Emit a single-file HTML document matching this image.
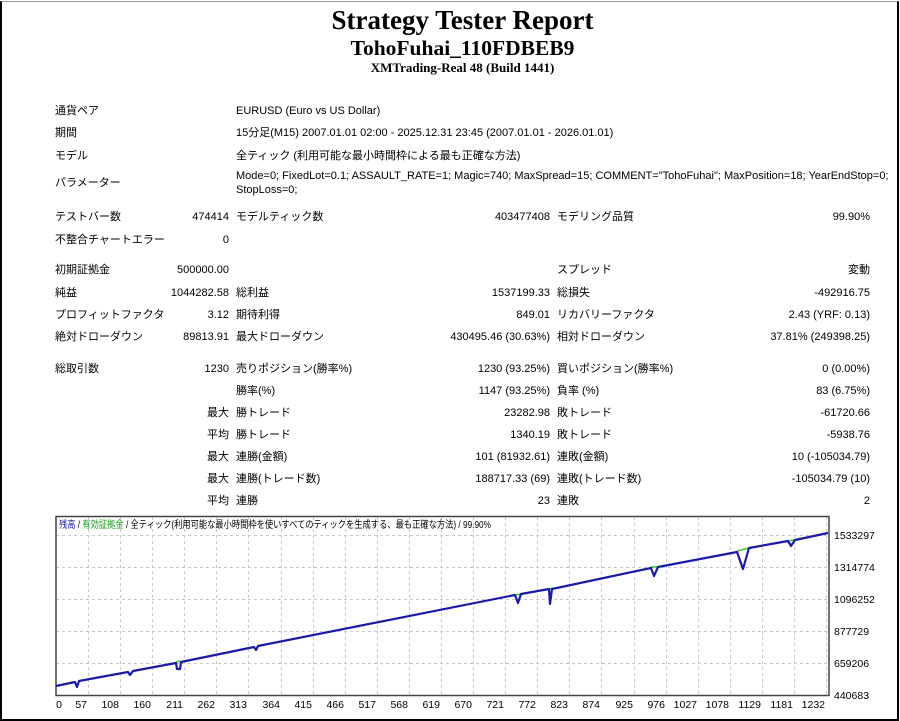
<!DOCTYPE html>
<html><head><meta charset="utf-8">
<style>
*{margin:0;padding:0}
body{width:900px;height:721px;background:#fff;position:relative;overflow:hidden;font-family:"Liberation Sans","Noto Sans CJK JP",sans-serif;font-size:11px;color:#000}
.frame{position:absolute;left:0;top:1px;width:895px;height:717px;border-left:2px solid #000;border-right:2px solid #000;border-bottom:2px solid #000;border-top:1px solid #999}
.t{position:absolute;white-space:nowrap;line-height:14px}
.r{text-align:right}
h1,h2,h3{position:absolute;left:0;width:925px;text-align:center;font-family:"Liberation Serif",serif;font-weight:bold;white-space:nowrap}
h1{top:5px;font-size:27px}
h2{top:36px;font-size:21.5px}
h3{top:60px;font-size:13px}
</style></head><body>
<div class="frame"></div>
<h1>Strategy Tester Report</h1>
<h2>TohoFuhai_110FDBEB9</h2>
<h3>XMTrading-Real 48 (Build 1441)</h3>

<div class="t" style="left:55px;top:104px">通貨ペア</div>
<div class="t" style="left:236px;top:104px">EURUSD (Euro vs US Dollar)</div>
<div class="t" style="left:55px;top:126px">期間</div>
<div class="t" style="left:236px;top:126px">15分足(M15) 2007.01.01 02:00 - 2025.12.31 23:45 (2007.01.01 - 2026.01.01)</div>
<div class="t" style="left:55px;top:149px">モデル</div>
<div class="t" style="left:236px;top:149px">全ティック (利用可能な最小時間枠による最も正確な方法)</div>
<div class="t" style="left:55px;top:176px">パラメーター</div>
<div class="t" style="left:236px;top:169px">Mode=0; FixedLot=0.1; ASSAULT_RATE=1; Magic=740; MaxSpread=15; COMMENT="TohoFuhai"; MaxPosition=18; YearEndStop=0;</div>
<div class="t" style="left:236px;top:183px">StopLoss=0;</div>

<div class="t" style="left:55px;top:210px">テストバー数</div>
<div class="t r" style="right:671px;top:210px">474414</div>
<div class="t" style="left:236px;top:210px">モデルティック数</div>
<div class="t r" style="right:350px;top:210px">403477408</div>
<div class="t" style="left:557px;top:210px">モデリング品質</div>
<div class="t r" style="right:30px;top:210px">99.90%</div>
<div class="t" style="left:55px;top:233px">不整合チャートエラー</div>
<div class="t r" style="right:671px;top:233px">0</div>

<div class="t" style="left:55px;top:263px">初期証拠金</div>
<div class="t r" style="right:671px;top:263px">500000.00</div>
<div class="t" style="left:557px;top:263px">スプレッド</div>
<div class="t r" style="right:30px;top:263px">変動</div>

<div class="t" style="left:55px;top:286px">純益</div>
<div class="t r" style="right:671px;top:286px">1044282.58</div>
<div class="t" style="left:236px;top:286px">総利益</div>
<div class="t r" style="right:350px;top:286px">1537199.33</div>
<div class="t" style="left:557px;top:286px">総損失</div>
<div class="t r" style="right:30px;top:286px">-492916.75</div>

<div class="t" style="left:55px;top:308px">プロフィットファクタ</div>
<div class="t r" style="right:671px;top:308px">3.12</div>
<div class="t" style="left:236px;top:308px">期待利得</div>
<div class="t r" style="right:350px;top:308px">849.01</div>
<div class="t" style="left:557px;top:308px">リカバリーファクタ</div>
<div class="t r" style="right:30px;top:308px">2.43 (YRF: 0.13)</div>

<div class="t" style="left:55px;top:330px">絶対ドローダウン</div>
<div class="t r" style="right:671px;top:330px">89813.91</div>
<div class="t" style="left:236px;top:330px">最大ドローダウン</div>
<div class="t r" style="right:350px;top:330px">430495.46 (30.63%)</div>
<div class="t" style="left:557px;top:330px">相対ドローダウン</div>
<div class="t r" style="right:30px;top:330px">37.81% (249398.25)</div>

<div class="t" style="left:55px;top:362px">総取引数</div>
<div class="t r" style="right:671px;top:362px">1230</div>
<div class="t" style="left:236px;top:362px">売りポジション(勝率%)</div>
<div class="t r" style="right:350px;top:362px">1230 (93.25%)</div>
<div class="t" style="left:557px;top:362px">買いポジション(勝率%)</div>
<div class="t r" style="right:30px;top:362px">0 (0.00%)</div>

<div class="t" style="left:236px;top:384px">勝率(%)</div>
<div class="t r" style="right:350px;top:384px">1147 (93.25%)</div>
<div class="t" style="left:557px;top:384px">負率 (%)</div>
<div class="t r" style="right:30px;top:384px">83 (6.75%)</div>

<div class="t r" style="right:671px;top:406px">最大</div>
<div class="t" style="left:236px;top:406px">勝トレード</div>
<div class="t r" style="right:350px;top:406px">23282.98</div>
<div class="t" style="left:557px;top:406px">敗トレード</div>
<div class="t r" style="right:30px;top:406px">-61720.66</div>

<div class="t r" style="right:671px;top:428px">平均</div>
<div class="t" style="left:236px;top:428px">勝トレード</div>
<div class="t r" style="right:350px;top:428px">1340.19</div>
<div class="t" style="left:557px;top:428px">敗トレード</div>
<div class="t r" style="right:30px;top:428px">-5938.76</div>

<div class="t r" style="right:671px;top:450px">最大</div>
<div class="t" style="left:236px;top:450px">連勝(金額)</div>
<div class="t r" style="right:350px;top:450px">101 (81932.61)</div>
<div class="t" style="left:557px;top:450px">連敗(金額)</div>
<div class="t r" style="right:30px;top:450px">10 (-105034.79)</div>

<div class="t r" style="right:671px;top:472px">最大</div>
<div class="t" style="left:236px;top:472px">連勝(トレード数)</div>
<div class="t r" style="right:350px;top:472px">188717.33 (69)</div>
<div class="t" style="left:557px;top:472px">連敗(トレード数)</div>
<div class="t r" style="right:30px;top:472px">-105034.79 (10)</div>

<div class="t r" style="right:671px;top:494px">平均</div>
<div class="t" style="left:236px;top:494px">連勝</div>
<div class="t r" style="right:350px;top:494px">23</div>
<div class="t" style="left:557px;top:494px">連敗</div>
<div class="t r" style="right:30px;top:494px">2</div>

<svg style="position:absolute;left:0;top:0" width="900" height="721">
<g stroke="#c8c8c8" stroke-width="1" stroke-dasharray="3,3" fill="none">
<line x1="56" y1="535.5" x2="829" y2="535.5"/>
<line x1="56" y1="567.5" x2="829" y2="567.5"/>
<line x1="56" y1="599.5" x2="829" y2="599.5"/>
<line x1="56" y1="631.5" x2="829" y2="631.5"/>
<line x1="56" y1="663.5" x2="829" y2="663.5"/>
<path d="M88.5 517V695M120.5 517V695M152.5 517V695M184.5 517V695M216.5 517V695M248.5 517V695M281.5 517V695M313.5 517V695M345.5 517V695M377.5 517V695M409.5 517V695M441.5 517V695M473.5 517V695M505.5 517V695M537.5 517V695M569.5 517V695M601.5 517V695M634.5 517V695M666.5 517V695M698.5 517V695M730.5 517V695M762.5 517V695M794.5 517V695M826.5 517V695"/>
</g>
<rect x="56" y="516.5" width="773" height="179" fill="none" stroke="#444" stroke-width="1.5"/>
<path d="M737 551 L749 548 M651 567 L657 567 M515 595 L521 594 M548 589 L553 588 M788 541 L794 540 M176 662 L180 661" stroke="#3c3" stroke-width="1.5" fill="none"/>
<polyline fill="none" stroke="#1a1aa8" stroke-width="2.2" stroke-linejoin="round" points="56,686 75,682 77,687 79,681 128,672 130,675 133,671 176,663 177,669 180,669 181,662 254,647 256,650 258,646 515,595 518,603 521,594 549,589 550,604 552,589 651,568 654,576 658,567 737,552 743,569 749,548 788,541 791,546 795,540 828,533"/>
<g font-size="10.5" font-family="Liberation Sans,sans-serif" text-anchor="end">
<text x="62" y="708">0</text>
<text x="87" y="708">57</text><text x="119" y="708">108</text><text x="151" y="708">160</text><text x="183" y="708">211</text><text x="215" y="708">262</text><text x="247" y="708">313</text><text x="280" y="708">364</text><text x="312" y="708">415</text><text x="344" y="708">466</text><text x="376" y="708">517</text><text x="408" y="708">568</text><text x="440" y="708">619</text><text x="472" y="708">670</text><text x="504" y="708">721</text><text x="536" y="708">772</text><text x="568" y="708">823</text><text x="600" y="708">874</text><text x="633" y="708">925</text><text x="665" y="708">976</text><text x="697" y="708">1027</text><text x="729" y="708">1078</text><text x="761" y="708">1129</text><text x="793" y="708">1181</text><text x="825" y="708">1232</text>
</g>
<g font-size="10.5" font-family="Liberation Sans,sans-serif">
<text x="834" y="539">1533297</text><text x="834" y="571">1314774</text><text x="834" y="603">1096252</text><text x="834" y="635">877729</text><text x="834" y="667">659206</text><text x="834" y="699">440683</text>
</g>
<text x="59" y="528" font-size="10" textLength="432" lengthAdjust="spacingAndGlyphs" font-family="Liberation Sans,Noto Sans CJK JP,sans-serif"><tspan fill="#1a1aa8">残高</tspan> / <tspan fill="#1a9a1a">有効証拠金</tspan> / 全ティック(利用可能な最小時間枠を使いすべてのティックを生成する、最も正確な方法) / 99.90%</text>
</svg>
</body></html>
